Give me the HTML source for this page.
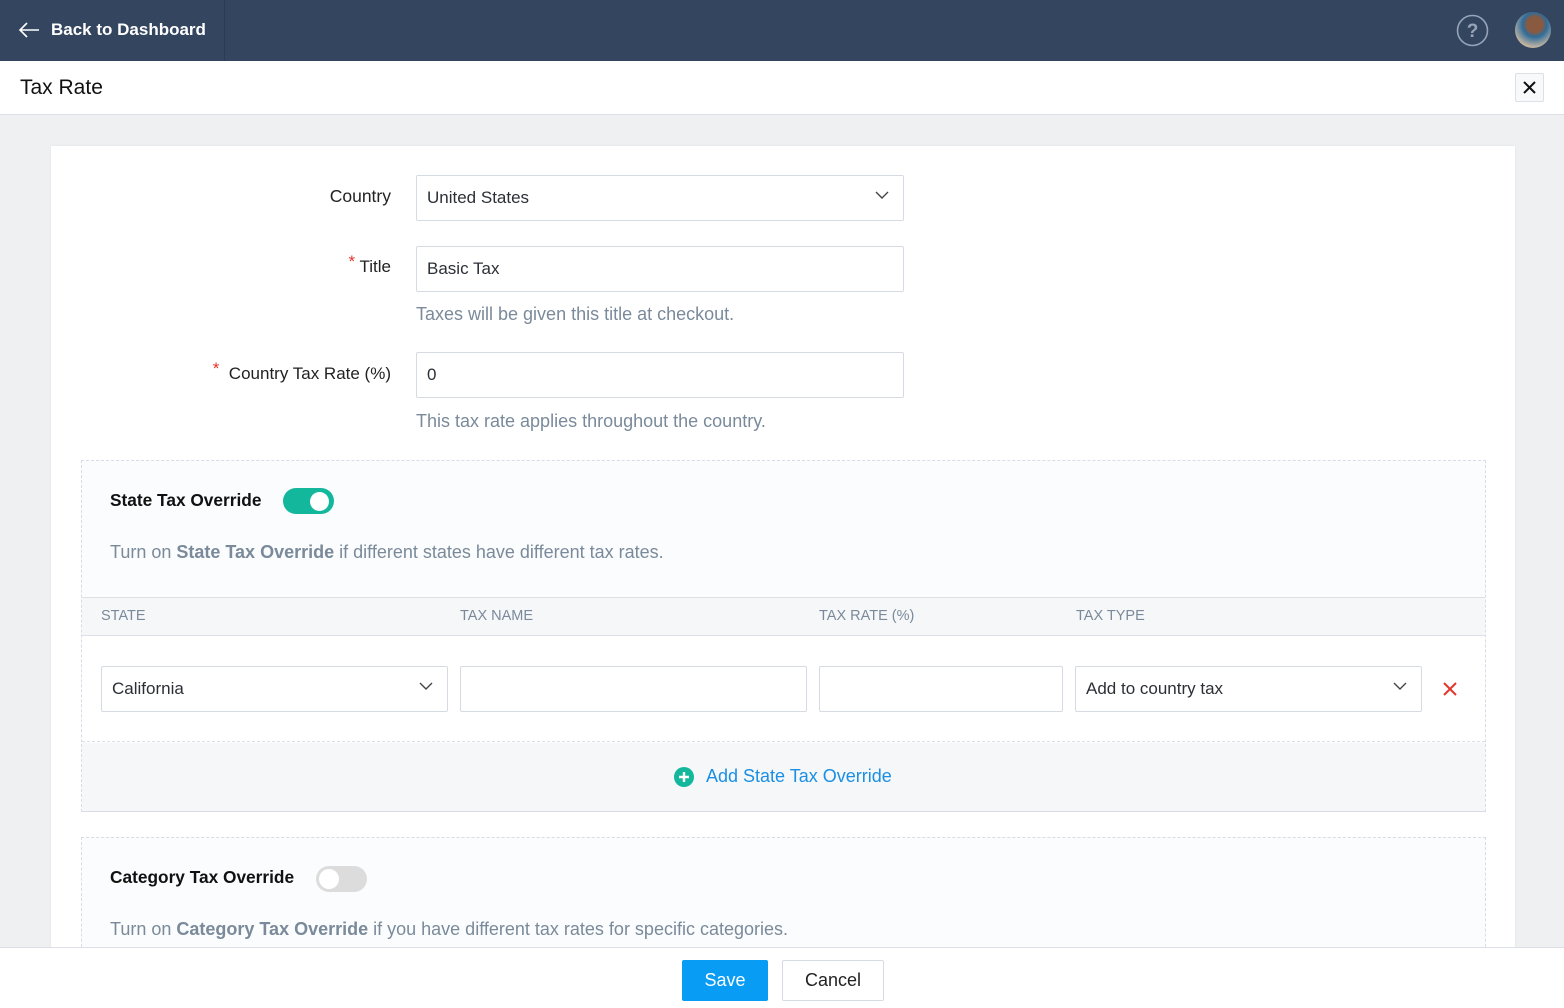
<!DOCTYPE html>
<html><head><meta charset="utf-8"><style>
*{box-sizing:border-box;margin:0;padding:0}
body{width:1564px;height:1008px;overflow:hidden;font-family:"Liberation Sans",sans-serif;background:#eef0f2;position:relative;color:#222}
.a{position:absolute}
.top{left:0;top:0;width:1564px;height:61px;background:#34455f}
.inp{position:absolute;border:1px solid #d6dbe3;border-radius:2px;background:#fff;height:46px;font-size:17px;color:#2c2f36;padding:0 10px;line-height:44px}
.chev{position:absolute;right:14px;top:15px}
.lbl{position:absolute;font-size:17px;color:#222;text-align:right}
.hint{position:absolute;font-size:18px;color:#7a8a9a}
.th{position:absolute;top:608px;font-size:14.5px;color:#7a8a9a}
</style></head><body>
<div class="a top"></div>
<div class="a" style="left:224px;top:0;width:1px;height:61px;background:#2c3a52"></div>
<svg class="a" style="left:18px;top:21px" width="22" height="18" viewBox="0 0 22 18"><path d="M21 9H2M9 2L2 9l7 7" fill="none" stroke="#fff" stroke-width="1.6"/></svg>
<div class="a" style="left:51px;top:20px;color:#fff;font-size:17px;font-weight:bold">Back to Dashboard</div>
<svg class="a" style="left:1456px;top:14px" width="33" height="33" viewBox="0 0 33 33"><circle cx="16.5" cy="16.5" r="15" fill="none" stroke="#97a4b8" stroke-width="1.6"/><text x="16.5" y="23" text-anchor="middle" font-size="19" font-weight="bold" fill="#97a4b8" font-family="Liberation Sans">?</text></svg>
<div class="a" style="left:1515px;top:12px;width:36px;height:36px;border-radius:50%;background:radial-gradient(circle at 55% 35%,#8a5a40 0 25%,#2f6c9a 40%,#c9b8a2 75%)"></div>
<div class="a" style="left:0;top:61px;width:1564px;height:54px;background:#fff;border-bottom:1px solid #dde1e7"></div>
<div class="a" style="left:20px;top:76px;font-size:21px;color:#111">Tax Rate</div>
<div class="a" style="left:1515px;top:73px;width:29px;height:29px;border:1px solid #dde1e7;border-radius:2px;background:#f8f9fb"></div>
<svg class="a" style="left:1522px;top:80px" width="15" height="15"><path d="M2 2L13 13M13 2L2 13" stroke="#111" stroke-width="2"/></svg>
<div class="a" style="left:51px;top:146px;width:1464px;height:810px;background:#fff;box-shadow:0 0 3px rgba(0,0,0,.06)"></div>

<div class="lbl" style="right:1173px;top:186px;font-size:17.5px">Country</div>
<div class="inp" style="left:416px;top:175px;width:488px">United States<svg class="chev" width="14" height="9"><path d="M1 1l6 6 6-6" fill="none" stroke="#444" stroke-width="1.4"/></svg></div>
<div class="lbl" style="right:1173px;top:257px"><span style="color:#e5352b;position:relative;top:-5px">*</span> Title</div>
<div class="inp" style="left:416px;top:246px;width:488px">Basic Tax</div>
<div class="hint" style="left:416px;top:304px">Taxes will be given this title at checkout.</div>
<div class="lbl" style="right:1173px;top:364px"><span style="color:#e5352b;position:relative;top:-5px">*</span>&nbsp; Country Tax Rate (%)</div>
<div class="inp" style="left:416px;top:352px;width:488px">0</div>
<div class="hint" style="left:416px;top:411px">This tax rate applies throughout the country.</div>

<div class="a" style="left:81px;top:460px;width:1405px;height:352px;background:#fbfcfd;border:1px dashed #d8dce6;border-bottom:1px solid #d8dce6"></div>
<div class="a" style="left:110px;top:490px;font-size:17.3px;font-weight:bold;color:#111">State Tax Override</div>
<div class="a" style="left:283px;top:488px;width:51px;height:26px;border-radius:13px;background:#13b89c"></div>
<div class="a" style="left:310px;top:492px;width:19px;height:19px;border-radius:50%;background:#fff"></div>
<div class="hint" style="left:110px;top:542px">Turn on <b>State Tax Override</b> if different states have different tax rates.</div>
<div class="a" style="left:82px;top:597px;width:1403px;height:39px;background:#f6f7f9;border-top:1px solid #dde1e7;border-bottom:1px solid #dde1e7"></div>
<div class="th" style="left:101px">STATE</div>
<div class="th" style="left:460px">TAX NAME</div>
<div class="th" style="left:819px">TAX RATE (%)</div>
<div class="th" style="left:1076px">TAX TYPE</div>
<div class="a" style="left:82px;top:636px;width:1403px;height:106px;background:#fff;border-bottom:1px dashed #dde1e7"></div>
<div class="inp" style="left:101px;top:666px;width:347px">California<svg class="chev" width="14" height="9"><path d="M1 1l6 6 6-6" fill="none" stroke="#444" stroke-width="1.4"/></svg></div>
<div class="inp" style="left:460px;top:666px;width:347px"></div>
<div class="inp" style="left:819px;top:666px;width:244px"></div>
<div class="inp" style="left:1075px;top:666px;width:347px">Add to country tax<svg class="chev" width="14" height="9"><path d="M1 1l6 6 6-6" fill="none" stroke="#444" stroke-width="1.4"/></svg></div>
<svg class="a" style="left:1443px;top:682px" width="14" height="14"><path d="M1 1L13 13M13 1L1 13" stroke="#e5352b" stroke-width="2"/></svg>
<div class="a" style="left:82px;top:743px;width:1403px;height:68px;background:#f6f7f8"></div>
<svg class="a" style="left:674px;top:767px" width="20" height="20"><circle cx="10" cy="10" r="10" fill="#13b89c"/><path d="M10 5v10M5 10h10" stroke="#fff" stroke-width="2.4"/></svg>
<div class="a" style="left:706px;top:766px;font-size:18px;color:#1a8fe3">Add State Tax Override</div>

<div class="a" style="left:81px;top:837px;width:1405px;height:120px;background:#fbfcfd;border:1px dashed #d8dce6"></div>
<div class="a" style="left:110px;top:867px;font-size:17.3px;font-weight:bold;color:#111">Category Tax Override</div>
<div class="a" style="left:316px;top:866px;width:51px;height:26px;border-radius:13px;background:#dcdcdc"></div>
<div class="a" style="left:319px;top:869px;width:20px;height:20px;border-radius:50%;background:#fff"></div>
<div class="hint" style="left:110px;top:919px">Turn on <b>Category Tax Override</b> if you have different tax rates for specific categories.</div>

<div class="a" style="left:0;top:947px;width:1564px;height:61px;background:#fff;border-top:1px solid #dde1e7"></div>
<div class="a" style="left:682px;top:960px;width:86px;height:41px;background:#089cf4;border-radius:2px;color:#fff;font-size:18px;text-align:center;line-height:41px">Save</div>
<div class="a" style="left:782px;top:960px;width:102px;height:41px;background:#fff;border:1px solid #d6dbe3;border-radius:2px;color:#222;font-size:18px;text-align:center;line-height:39px">Cancel</div>
</body></html>
